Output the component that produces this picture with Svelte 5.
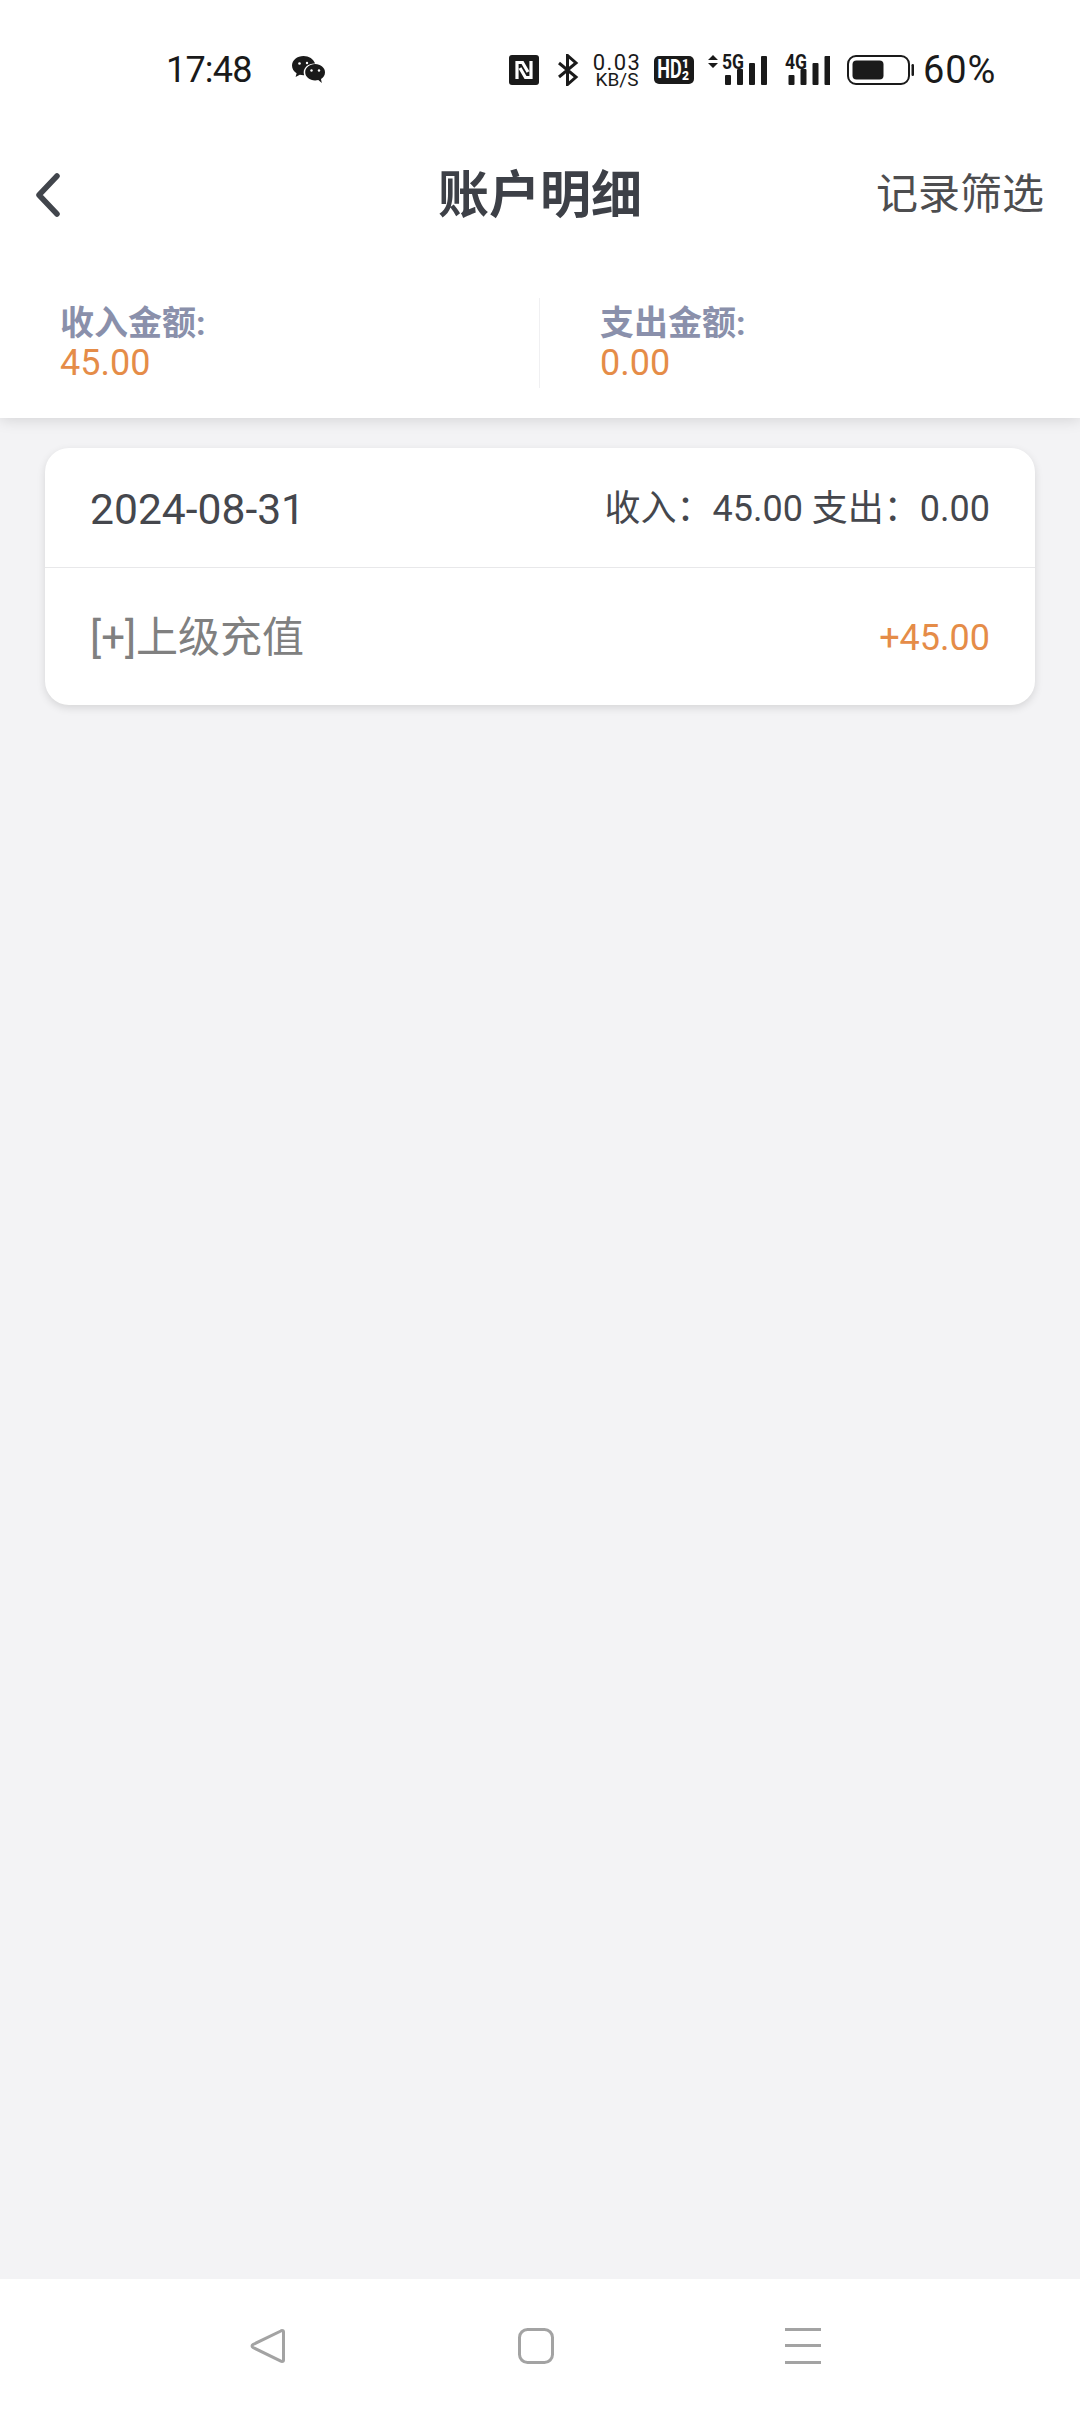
<script>
  const bars = [
    { x: 0, h: 10 },
    { x: 12, h: 16 },
    { x: 24, h: 22 },
    { x: 36, h: 29 }
  ];
</script>

<div class="page">
  <header class="head">
    <div class="status">
      <span class="time">17:48</span>
      <svg class="wechat" viewBox="0 0 33 28" aria-hidden="true">
        <path class="ink" d="M11.500 0C5.200 0 0 4.200 0 9.600c0 3.200 1.800 5.900 4.600 7.700L3.600 21l4.200-2.200c1.200.3 2.400.5 3.700.5h.7c-.3-.9-.5-1.900-.5-2.900 0-5 4.700-8.900 10.600-8.900h.8C21.600 3 17 0 11.500 0z" />
        <path class="ink" d="M33 16.200c0-4.500-4.400-8.200-9.900-8.200s-9.900 3.700-9.900 8.200 4.400 8.200 9.900 8.200c1.100 0 2.200-.2 3.200-.4l3.500 3-.8-3.900c2.400-1.500 4-3.900 4-6.900z" />
        <circle class="cut" cx="7.500" cy="7.500" r="1.300" />
        <circle class="cut" cx="15" cy="7" r="1.200" />
        <circle class="cut" cx="19.500" cy="14.500" r="1.200" />
        <circle class="cut" cx="27" cy="14.500" r="1.200" />
      </svg>

      <div class="sys">
        <svg class="nfc" viewBox="0 0 30 30" aria-hidden="true">
          <rect class="ink" width="30" height="30" rx="3" />
          <path class="nfc-n" d="M8 24V7.500h5.500L19 17M22 6v16.500h-5.500L11 13" />
        </svg>
        <svg class="bt" viewBox="0 0 22 32" aria-hidden="true">
          <path class="bt-line" d="M2 9l17 14-8.500 7.500V1.500L19 9 2 23" />
        </svg>
        <div class="speed"><span class="speed-num">0.03</span><span class="speed-unit">KB/S</span></div>
        <div class="hd"><span class="hd-main">HD</span><span class="hd-sub"><b>1</b><b>2</b></span></div>
        <svg class="net five" viewBox="0 -8 60 48" aria-hidden="true">
          <path class="ink" d="M0 6l5-5 5 5zM0 9h10l-5 5z" />
          <text class="net-label" x="14" y="15" textLength="22" lengthAdjust="spacingAndGlyphs">5G</text>
          {#each bars as b}
            <rect class="ink" x={17 + b.x} y={31 - b.h} width="6" height={b.h} rx="1" />
          {/each}
        </svg>
        <svg class="net four" viewBox="0 -8 45 48" aria-hidden="true">
          <text class="net-label" x="0" y="15" textLength="22" lengthAdjust="spacingAndGlyphs">4G</text>
          {#each bars as b}
            <rect class="ink" x={3.500 + b.x} y={31 - b.h} width="6" height={b.h} rx="1" />
          {/each}
        </svg>
        <svg class="battery" viewBox="0 0 67 30" aria-hidden="true">
          <rect class="batt-shell" x="1" y="1" width="61" height="28" rx="8" />
          <rect class="ink" x="5.500" y="5.500" width="31" height="19" rx="4" />
          <rect class="ink" x="64.500" y="9" width="2.500" height="12" rx="1.200" />
        </svg>
        <span class="pct">60%</span>
      </div>
    </div>

    <nav class="bar">
      <svg class="back" viewBox="0 0 24 44" aria-hidden="true">
        <path d="M21 3L3 22l18 19" />
      </svg>
      <h1 class="title">账户明细</h1>
      <span class="filter">记录筛选</span>
    </nav>

    <section class="summary">
      <div class="col first">
        <div class="label">收入金额:</div>
        <div class="amount">45.00</div>
      </div>
      <div class="col split">
        <div class="label">支出金额:</div>
        <div class="amount">0.00</div>
      </div>
    </section>
  </header>

  <main class="list">
    <article class="card">
      <div class="row top">
        <span class="date">2024-08-31</span>
        <span class="totals">收入：45.00 支出：0.00</span>
      </div>
      <div class="row entry">
        <span class="name">[+]上级充值</span>
        <span class="delta">+45.00</span>
      </div>
    </article>
  </main>

  <footer class="softkeys">
    <svg class="key tri" viewBox="0 0 36 36" aria-hidden="true">
      <path d="M32 2.500c1 0 1.500.6 1.500 1.500v28c0 1-.5 1.500-1.500 1.500-.4 0-.8-.1-1.200-.4L3 19.500c-1.300-.8-1.300-2.200 0-3L30.800 3c.4-.3.800-.5 1.200-.5z" />
    </svg>
    <svg class="key sq" viewBox="0 0 36 36" aria-hidden="true">
      <rect x="1.500" y="1.500" width="33" height="33" rx="8" />
    </svg>
    <div class="key menu"><i></i><i></i><i></i></div>
  </footer>
</div>

<style>
  :global(body) {
    margin: 0;
    background: #f3f3f5;
  }

  .page {
    width: 1080px;
    height: 2412px;
    display: flex;
    flex-direction: column;
    background: #f3f3f5;
    font-family: Roboto, "Noto Sans CJK SC", sans-serif;
    overflow: hidden;
  }

  .head {
    background: #fff;
    box-shadow: 0 2px 14px rgba(0, 0, 0, 0.13);
    position: relative;
  }

  .ink { fill: #1a1a1a; }
  .cut { fill: #fff; }

  .status {
    height: 136px;
    padding: 2px 85px 0 166px;
    display: flex;
    align-items: center;
    color: #1a1a1a;
  }

  .time {
    font-size: 36px;
    line-height: 1;
    width: 84px;
    letter-spacing: -0.8px;
    white-space: nowrap;
  }

  .wechat {
    width: 33px;
    height: 28px;
    margin-left: 42px;
  }

  .sys {
    margin-left: auto;
    display: flex;
    align-items: center;
  }

  .nfc { width: 30px; height: 30px; }
  .nfc-n {
    fill: none;
    stroke: #fff;
    stroke-width: 3.2;
    stroke-linejoin: miter;
  }

  .bt { width: 22px; height: 32px; margin-left: 18px; }
  .bt-line {
    fill: none;
    stroke: #1a1a1a;
    stroke-width: 3;
  }

  .speed {
    width: 50px;
    margin-left: 13px;
    display: flex;
    flex-direction: column;
    align-items: center;
  }
  .speed-num { font-size: 22px; height: 19px; letter-spacing: 1.4px; line-height: 19px; white-space: nowrap; }
  .speed-unit { font-size: 19px; height: 15px; line-height: 15px; white-space: nowrap; }

  .hd {
    width: 40px;
    height: 28px;
    margin-left: 12px;
    border-radius: 5px;
    background: #1a1a1a;
    color: #fff;
    display: flex;
    align-items: center;
    justify-content: center;
    font-weight: 700;
  }
  .hd-main {
    font-size: 25px;
    line-height: 28px;
    width: 23px;
    display: inline-flex;
    justify-content: center;
    transform: scaleX(0.72);
  }
  .hd-sub {
    display: flex;
    flex-direction: column;
    font-size: 12px;
    line-height: 12px;
    width: 10px;
    align-items: center;
  }
  .hd-sub b { display: block; }

  .net { height: 48px; }
  .five { width: 60px; margin-left: 14px; }
  .four { width: 45px; margin-left: 17px; }
  .net-label {
    font-family: Roboto, sans-serif;
    font-size: 20px;
    font-weight: 700;
    fill: #1a1a1a;
  }

  .battery { width: 67px; height: 30px; margin-left: 17px; }
  .batt-shell {
    fill: none;
    stroke: #1a1a1a;
    stroke-width: 2;
  }

  .pct {
    font-size: 38px;
    line-height: 1;
    margin-left: 9px;
    width: 72px;
    letter-spacing: 0.9px;
    white-space: nowrap;
  }

  .bar {
    height: 114px;
    display: flex;
    align-items: center;
    justify-content: space-between;
    padding: 0 36px;
    position: relative;
  }

  .back {
    width: 24px;
    height: 44px;
    fill: none;
    stroke: #41454c;
    stroke-width: 5.500;
    stroke-linecap: round;
    stroke-linejoin: round;
  }

  .title {
    margin: 0;
    position: absolute;
    left: 0;
    right: 0;
    top: 28px;
    text-align: center;
    font-size: 51px;
    line-height: 60px;
    font-weight: 700;
    color: #3d4047;
    pointer-events: none;
  }

  .filter {
    font-size: 42px;
    line-height: 60px;
    color: #4d4d4f;
  }

  .summary {
    display: flex;
    padding: 46px 0 30px;
  }

  .col {
    height: 90px;
    box-sizing: border-box;
    padding: 5px 0 5px 60px;
  }

  .first { width: 539px; }
  .split {
    width: 541px;
    border-left: 1px solid #f0f0f2;
  }

  .label {
    font-size: 34px;
    line-height: 40px;
    font-weight: 700;
    color: #8a90ab;
  }

  .amount {
    font-size: 36px;
    line-height: 40px;
    color: #e58c48;
  }

  .list {
    flex: 1;
    padding: 30px 45px;
  }

  .card {
    background: #fff;
    border-radius: 24px;
    box-shadow: 0 3px 9px rgba(0, 0, 0, 0.12);
    overflow: hidden;
  }

  .row {
    display: flex;
    align-items: center;
    justify-content: space-between;
    padding: 0 45px;
  }

  .row span {
    line-height: 50px;
    white-space: nowrap;
  }

  .top {
    height: 116px;
    padding-top: 3px;
    border-bottom: 1px solid #e8e8ea;
  }

  .entry {
    height: 135px;
    padding-top: 2px;
  }

  .date {
    font-size: 42.600px;
    color: #45474d;
  }

  .totals {
    font-size: 36px;
    color: #45474d;
  }

  .name {
    font-size: 42px;
    color: #808080;
  }

  .delta {
    font-size: 36px;
    color: #e58c48;
  }

  .softkeys {
    height: 133px;
    flex: none;
    background: #fff;
    display: flex;
    align-items: center;
    justify-content: space-between;
    padding: 0 259px 0 250px;
  }

  .key { width: 36px; height: 36px; }

  .tri path, .sq rect {
    fill: none;
    stroke: #a3a3a3;
    stroke-width: 3;
  }

  .menu {
    display: flex;
    flex-direction: column;
    justify-content: space-between;
  }
  .menu i {
    display: block;
    height: 3px;
    background: #a3a3a3;
  }
</style>
